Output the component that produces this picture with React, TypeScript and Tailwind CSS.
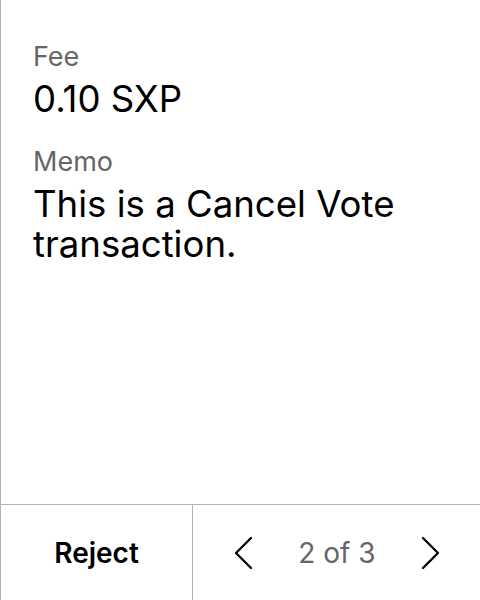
const fields = [
  { label: "Fee", value: "0.10 SXP" },
  { label: "Memo", value: "This is a Cancel Vote transaction." },
];

function Chevron({ dir }: { dir: "left" | "right" }) {
  return (
    <svg width="20" height="34" viewBox="0 0 20 34" fill="none" stroke="black" strokeWidth="2.3" strokeLinecap="round" strokeLinejoin="round">
      {dir === "left" ? <path d="M18 2 3 17l15 15" /> : <path d="M2 2l15 15L2 32" />}
    </svg>
  );
}

export default function App() {
  return (
    <div
      className="flex h-[600px] w-[480px] flex-col border-l border-[#b3b3b3] bg-white text-black"
      style={{ fontFamily: "Inter, 'Noto Sans', sans-serif" }}
    >
      {/* Fields */}
      <div className="flex flex-1 flex-col gap-[27px] px-[32px] pt-[41px]">
        {fields.map((f) => (
          <div key={f.label} className="flex flex-col">
            <span className="text-[27px] leading-[32px] text-[#666666]">{f.label}</span>
            <span className="mt-[6px] text-[36.6px] leading-[40px]">{f.value}</span>
          </div>
        ))}
      </div>

      {/* Footer */}
      <div className="flex h-[96px] border-t border-[#b3b3b3]">
        <button className="flex w-[192px] items-center justify-center border-r border-[#b3b3b3] text-[28px] font-semibold">
          Reject
        </button>
        <div className="flex flex-1 items-center justify-between pl-[40px] pr-[39px]">
          <Chevron dir="left" />
          <span className="text-[28px] text-[#666666]">2 of 3</span>
          <Chevron dir="right" />
        </div>
      </div>
    </div>
  );
}
